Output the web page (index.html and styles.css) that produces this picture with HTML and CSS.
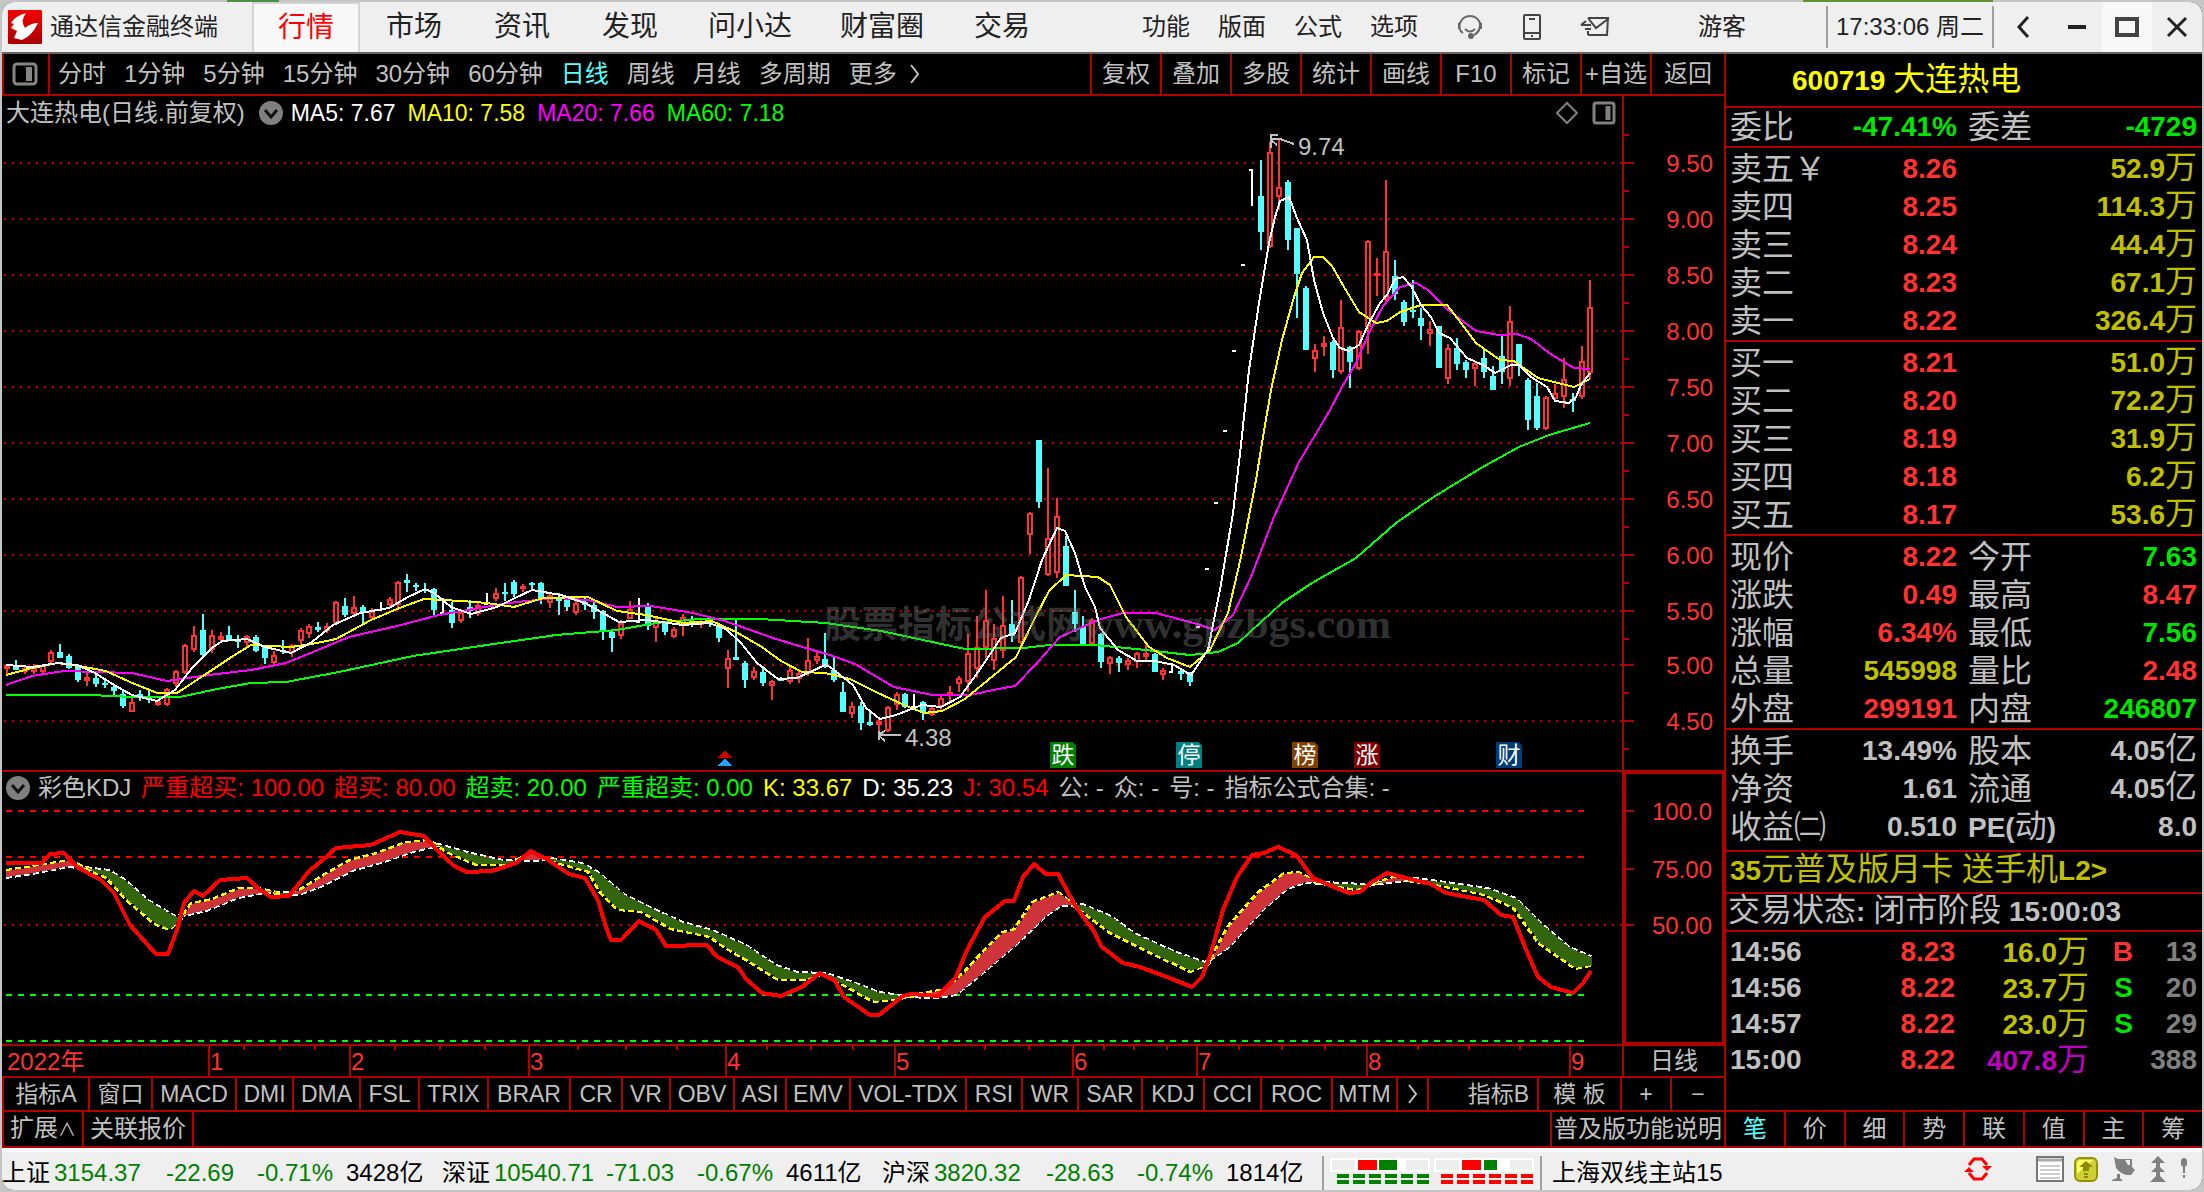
FILE: index.html
```html
<!DOCTYPE html>
<html lang="zh-CN">
<head>
  <meta charset="UTF-8" />
  <meta name="viewport" content="width=device-width, initial-scale=1.0"/>
  <title>通达信金融终端</title>
  <link rel="stylesheet" href="styles.css">
</head>
<body>
  <div class="window">
    <header class="titlebar">
      <svg class="logo" width="34" height="34" viewBox="0 0 34 34">
        <defs><linearGradient id="logo-red" x2="0" y2="1"><stop stop-color="#f20000"/><stop offset="1" stop-color="#a00"/></linearGradient></defs>
        <rect width="34" height="34" rx="1" fill="url(#logo-red)"/>
        <path d="M18 3Q7 6 3 13l3 1-3 4 6 3-3 7 8 2q10-4 16-17-7 0-13 5-5-7 1-15z" fill="#fff"/>
      </svg>
      <span class="app-name">通达信金融终端</span>
      <nav class="tabs">
        <button class="tab active">行情</button>
        <button class="tab">市场</button>
        <button class="tab">资讯</button>
        <button class="tab">发现</button>
        <button class="tab">问小达</button>
        <button class="tab">财富圈</button>
        <button class="tab">交易</button>
      </nav>
      <nav class="menu">
        <button>功能</button>
        <button>版面</button>
        <button>公式</button>
        <button>选项</button>
      </nav>
      <div class="tools">
        <button aria-label="客服">
          <svg width="28" height="28" viewBox="0 0 28 28" fill="none" stroke="#666" stroke-width="2">
            <path d="M7 20Q2 17 4 10 7 3 14 3t10 7q1 8-6 12M3 10v6M25 10v6M9 16q5 5 10 0"/>
            <circle cx="15" cy="23" r="2" fill="#666"/>
          </svg>
        </button>
        <button aria-label="手机版">
          <svg width="20" height="28" viewBox="0 0 20 28" fill="none" stroke="#444" stroke-width="2">
            <rect x="2" y="2" width="16" height="24" rx="1"/>
            <path d="M2 20h16M7 6h6M9 23h2"/>
          </svg>
        </button>
        <button aria-label="消息">
          <svg width="30" height="28" viewBox="0 0 30 28" fill="none" stroke="#444" stroke-width="2">
            <path d="M8 5h20l-1 17H8M8 5l8 10L28 6M1 12h10M1 12l5-4M5 16h6M8 22v-4"/>
          </svg>
        </button>
      </div>
      <button class="user">游客</button>
      <time class="clock">17:33:06 周二</time>
      <div class="win-buttons">
        <button aria-label="后退"><svg width="16" height="24" viewBox="0 0 16 24"><path d="M13 2 4 12l9 10" fill="none" stroke="#222" stroke-width="3"/></svg></button>
        <button aria-label="最小化"><svg width="18" height="24" viewBox="0 0 18 24"><path d="M0 12h18" stroke="#222" stroke-width="4"/></svg></button>
        <button class="max" aria-label="最大化"><svg width="26" height="24" viewBox="0 0 26 24"><rect x="3" y="4" width="20" height="16" fill="none" stroke="#444" stroke-width="4"/></svg></button>
        <button aria-label="关闭"><svg width="24" height="24" viewBox="0 0 24 24"><path d="M3 3l18 18M21 3 3 21" stroke="#222" stroke-width="3"/></svg></button>
      </div>
    </header>

    <div class="content">
      <main class="left">
        <div class="toolbar">
          <button class="pane-toggle" aria-label="侧栏">
            <svg width="26" height="24" viewBox="0 0 26 24"><rect x="2" y="2" width="22" height="20" rx="3" fill="none" stroke="#858585" stroke-width="3"/><rect x="14" y="5" width="6" height="14" fill="#858585"/></svg>
          </button>
          <nav class="periods">
            <button>分时</button>
            <button>1分钟</button>
            <button>5分钟</button>
            <button>15分钟</button>
            <button>30分钟</button>
            <button>60分钟</button>
            <button class="on">日线</button>
            <button>周线</button>
            <button>月线</button>
            <button>多周期</button>
            <button class="more">更多 <svg width="12" height="22" viewBox="0 0 12 22"><path d="M2 2l7 9-7 9" fill="none" stroke="#c0c0c0" stroke-width="2"/></svg></button>
          </nav>
          <nav class="actions">
            <button>复权</button>
            <button>叠加</button>
            <button>多股</button>
            <button>统计</button>
            <button>画线</button>
            <button>F10</button>
            <button>标记</button>
            <button>+自选</button>
            <button>返回</button>
          </nav>
        </div>

        <section class="pane price">
          <div class="plot">
            <div class="legend ma">
              <span class="name">大连热电(日线.前复权)</span>
              <svg class="drop" width="24" height="24" viewBox="0 0 24 24"><circle cx="12" cy="12" r="12" fill="#808080"/><path d="M6 9l6 7 6-7" fill="none" stroke="#111" stroke-width="3"/></svg>
              <span class="white">MA5: 7.67</span>
              <span class="yellow">MA10: 7.58</span>
              <span class="magenta">MA20: 7.66</span>
              <span class="green">MA60: 7.18</span>
              <svg class="pane-icons" width="60" height="24" viewBox="0 0 60 24" fill="none" stroke="#808080">
                <path d="M11 2l10 10-10 10L1 12z" stroke-width="2"/>
                <rect x="38" y="2" width="20" height="20" rx="2" stroke-width="3"/>
                <path d="M52 5v14" stroke-width="5"/>
              </svg>
            </div>
            <svg class="canvas" id="price-chart" height="640"></svg>
          </div>
          <svg class="axis" id="price-axis" height="674"></svg>
        </section>

        <section class="pane kdj">
          <div class="plot">
            <div class="legend">
              <svg class="drop" width="24" height="24" viewBox="0 0 24 24"><circle cx="12" cy="12" r="12" fill="#808080"/><path d="M6 9l6 7 6-7" fill="none" stroke="#111" stroke-width="3"/></svg>
              <span class="name">彩色KDJ</span>
              <span class="red">严重超买: 100.00</span>
              <span class="red">超买: 80.00</span>
              <span class="green">超卖: 20.00</span>
              <span class="green">严重超卖: 0.00</span>
              <span class="yellow">K: 33.67</span>
              <span class="white">D: 35.23</span>
              <span class="red">J: 30.54</span>
              <span>公: -</span>
              <span>众: -</span>
              <span>号: -</span>
              <span>指标公式合集: -</span>
            </div>
            <svg class="canvas" id="kdj-chart" height="240"></svg>
          </div>
          <svg class="axis boxed" id="kdj-axis"></svg>
        </section>

        <div class="pane dates">
          <svg class="canvas" id="date-axis" height="30"></svg>
          <div class="period-name">日线</div>
        </div>

        <nav class="indicators">
          <button>指标A</button><button>窗口</button><button>MACD</button><button>DMI</button><button>DMA</button><button>FSL</button><button>TRIX</button><button>BRAR</button><button>CR</button><button>VR</button><button>OBV</button><button>ASI</button><button>EMV</button><button>VOL-TDX</button><button>RSI</button><button>WR</button><button>SAR</button><button>KDJ</button><button>CCI</button><button>ROC</button><button>MTM</button><button aria-label="更多指标"><svg width="12" height="22" viewBox="0 0 12 22"><path d="M2 2l7 9-7 9" fill="none" stroke="#c0c0c0" stroke-width="2"/></svg></button><button class="end">指标B</button><button>模 板</button><button>+</button><button>−</button>
        </nav>

        <nav class="extras">
          <button>扩展<span class="caret">∧</span></button>
          <button>关联报价</button>
          <button class="help">普及版功能说明</button>
        </nav>
      </main>

      <aside class="quote">
        <h1>600719 <span class="cn">大连热电</span></h1>
        <table class="four">
          <tr><th>委比</th><td class="dn">-47.41%</td><th>委差</th><td class="dn">-4729</td></tr>
        </table>
        <table class="padded">
          <tr><th>卖五￥</th><td class="up">8.26</td><td class="vol">52.9<span class="cn">万</span></td></tr>
          <tr><th>卖四</th><td class="up">8.25</td><td class="vol">114.3<span class="cn">万</span></td></tr>
          <tr><th>卖三</th><td class="up">8.24</td><td class="vol">44.4<span class="cn">万</span></td></tr>
          <tr><th>卖二</th><td class="up">8.23</td><td class="vol">67.1<span class="cn">万</span></td></tr>
          <tr><th>卖一</th><td class="up">8.22</td><td class="vol">326.4<span class="cn">万</span></td></tr>
        </table>
        <table class="padded">
          <tr><th>买一</th><td class="up">8.21</td><td class="vol">51.0<span class="cn">万</span></td></tr>
          <tr><th>买二</th><td class="up">8.20</td><td class="vol">72.2<span class="cn">万</span></td></tr>
          <tr><th>买三</th><td class="up">8.19</td><td class="vol">31.9<span class="cn">万</span></td></tr>
          <tr><th>买四</th><td class="up">8.18</td><td class="vol">6.2<span class="cn">万</span></td></tr>
          <tr><th>买五</th><td class="up">8.17</td><td class="vol">53.6<span class="cn">万</span></td></tr>
        </table>
        <table class="four padded">
          <tr><th>现价</th><td class="up">8.22</td><th>今开</th><td class="dn">7.63</td></tr>
          <tr><th>涨跌</th><td class="up">0.49</td><th>最高</th><td class="up">8.47</td></tr>
          <tr><th>涨幅</th><td class="up">6.34%</td><th>最低</th><td class="dn">7.56</td></tr>
          <tr><th>总量</th><td class="vol">545998</td><th>量比</th><td class="up">2.48</td></tr>
          <tr><th>外盘</th><td class="up">299191</td><th>内盘</th><td class="dn">246807</td></tr>
        </table>
        <table class="four padded last">
          <tr><th>换手</th><td>13.49%</td><th>股本</th><td>4.05<span class="cn">亿</span></td></tr>
          <tr><th>净资</th><td>1.61</td><th>流通</th><td>4.05<span class="cn">亿</span></td></tr>
          <tr><th>收益㈡</th><td>0.510</td><th><b>PE(</b>动<b>)</b></th><td>8.0</td></tr>
        </table>
        <a class="promo" href="#">35<span class="cn">元普及版月卡 送手机</span>L2&gt;</a>
        <p class="state"><span class="cn">交易状态</span>: <span class="cn">闭市阶段</span> 15:00:03</p>
        <table class="ticks">
          <tr><td>14:56</td><td class="up">8.23</td><td class="vol">16.0<span class="cn">万</span></td><td class="up">B</td><td>13</td></tr>
          <tr><td>14:56</td><td class="up">8.22</td><td class="vol">23.7<span class="cn">万</span></td><td class="dn">S</td><td>20</td></tr>
          <tr><td>14:57</td><td class="up">8.22</td><td class="vol">23.0<span class="cn">万</span></td><td class="dn">S</td><td>29</td></tr>
          <tr><td>15:00</td><td class="up">8.22</td><td class="big">407.8<span class="cn">万</span></td><td></td><td>388</td></tr>
        </table>
        <nav class="side-tabs">
          <button class="on">笔</button><button>价</button><button>细</button><button>势</button><button>联</button><button>值</button><button>主</button><button>筹</button>
        </nav>
      </aside>
    </div>

    <footer class="statusbar">
      <div class="index"><span>上证</span><span class="fall">3154.37</span><span class="fall r">-22.69</span><span class="fall r">-0.71%</span><span class="amt">3428亿</span></div>
      <div class="index"><span>深证</span><span class="fall">10540.71</span><span class="fall r">-71.03</span><span class="fall r">-0.67%</span><span class="amt">4611亿</span></div>
      <div class="index"><span>沪深</span><span class="fall">3820.32</span><span class="fall r">-28.63</span><span class="fall r">-0.74%</span><span class="amt">1814亿</span></div>
      <div class="meters">
        <svg width="206" height="28" viewBox="0 0 206 28">
          <path d="M0 0h100v14H0zM104 0h100v14H104z" fill="#fff"/>
          <path d="M2 2h23v10H2zM76 2h22v10H76zM106 2h23v10h-23zM180 2h22v10h-22z" fill="#eee"/>
          <path d="M28 2h19v10H28zM132 2h19v10h-19z" fill="#f00"/>
          <path d="M49 2h18v10H49zM154 2h13v10h-13z" fill="#008000"/>
          <path d="M7 18h94M7 24h94" stroke="#008000" stroke-width="4" stroke-dasharray="12 4"/>
          <path d="M111 18h94M111 24h94" stroke="#f00" stroke-width="4" stroke-dasharray="12 4"/>
        </svg>
      </div>
      <span class="server">上海双线主站15</span>
      <div class="tray">
        <svg width="28" height="26" viewBox="0 0 28 26"><path d="M5 9l5-6h8l5 6M5 17l5 6h8l5-6" fill="none" stroke="#f00" stroke-width="3"/><path d="M18 10h10l-5 5zM0 16h10l-5-5z" fill="#f00"/></svg>
        <svg class="doc" width="28" height="26" viewBox="0 0 28 26"><rect x="1" y="1" width="26" height="24" fill="#fff" stroke="#777" stroke-width="2"/><path d="M2 4h24" stroke="#aaa" stroke-width="3"/><path d="M4 10h20M4 14h20M4 18h20M4 22h20" stroke="#ccc" stroke-width="2"/></svg>
        <svg width="24" height="26" viewBox="0 0 24 26"><rect x="1" y="2" width="22" height="23" rx="5" fill="#cfcf38" stroke="#949400" stroke-width="2"/><path d="M3 18V8q0-4 4-4h12z" fill="#ffff66"/><path d="M12 5l7 6h-4v4H9v-4H5zM10 17h4v2h-4zM10 20h4v2h-4z" fill="#8a8a00"/></svg>
        <svg class="dish" width="24" height="26" viewBox="0 0 24 26"><path d="M2 1l4 2h14v8l3 3-4 5q-9 1-15-7zM5 18h3v4l3 3H0v-1l5-2z" fill="#808080"/><path d="M13 4h5v5h-2z" fill="#eee"/></svg>
        <svg class="up-arrows" width="16" height="26" viewBox="0 0 16 26"><path d="M8 0l7 7H1zM8 9l7 7H1zM8 18l8 8H0z" fill="#808080"/><path d="M8 4v22" stroke="#808080" stroke-width="4"/></svg>
        <svg class="bang" width="8" height="26" viewBox="0 0 8 26"><path d="M3 2h2l2 2v5l-2 2v6H3v-6L1 9V4zM3 19h2v3H3z" fill="#808080"/></svg>
      </div>
    </footer>
  </div>
  <script src="chart.js"></script>
</body>
</html>
```

FILE: styles.css
```css
* {
  box-sizing: border-box;
}

body {
  margin: 0;
  padding: 2px;
  min-height: 100vh;
  background:
    linear-gradient(#4d8f45, #4d8f45) 227px 0 / 52px 2px no-repeat,
    linear-gradient(#5f9432, #5f9432) 1803px 0 / 190px 2px no-repeat,
    #c6c6c6;
  font-family: "Liberation Sans", "Noto Sans CJK SC", sans-serif;
  font-size: 24px;
  line-height: 30px;
  color: #c0c0c0;
}

button {
  margin: 0;
  padding: 0;
  border: 0;
  background: none;
  color: inherit;
  font: inherit;
  white-space: nowrap;
  cursor: pointer;
}

svg {
  display: block;
  flex: none;
}

.window {
  background: #000;
  border-radius: 12px;
  overflow: hidden;
}

/* title bar */
.titlebar {
  display: flex;
  align-items: center;
  height: 52px;
  background: #efefef;
  border-bottom: 2px solid #666;
  color: #222;
}

.logo {
  margin-left: 6px;
}

.app-name {
  width: 168px;
  margin: 0 34px 0 8px;
  white-space: nowrap;
}

.tabs {
  display: flex;
  align-self: stretch;
}

.tab {
  min-width: 108px;
  padding: 0 24px;
  font-size: 28px;
}

.tab.active {
  background: #f8f8f8;
  border: 2px solid #d4d4d4;
  border-bottom: 0;
  color: #f00;
}

.menu {
  display: flex;
  gap: 28px;
  margin-left: auto;
}

.tools {
  display: flex;
  gap: 38px;
  margin-left: 38px;
}

.user {
  margin: 0 80px 0 88px;
}

.clock {
  display: flex;
  align-items: center;
  align-self: stretch;
  width: 168px;
  margin: 4px 0;
  padding-left: 8px;
  border-left: 2px solid #a0a0a0;
  border-right: 2px solid #a0a0a0;
  white-space: nowrap;
}

.win-buttons {
  display: flex;
  align-self: stretch;
}

.win-buttons button {
  display: flex;
  align-items: center;
  justify-content: center;
  width: 50px;
}

.win-buttons button:first-child {
  width: 58px;
}

.win-buttons .max {
  background: #f8f8f8;
}

/* two columns */
.content {
  display: flex;
}

.left {
  flex: 1;
  min-width: 0;
}

.quote {
  display: flex;
  flex-direction: column;
  width: 478px;
  border-left: 2px solid #b00000;
}

/* period toolbar */
.toolbar {
  display: flex;
  height: 42px;
  border-bottom: 2px solid #b00000;
}

.pane-toggle {
  width: 48px;
  padding-left: 8px;
  border-left: 2px solid #b00000;
  border-right: 2px solid #b00000;
}

.periods {
  display: flex;
  gap: 18px;
  padding-left: 8px;
}

.more {
  display: flex;
  align-items: center;
  gap: 12px;
}

.on {
  color: #54ffff;
}

.actions {
  display: flex;
  margin-left: auto;
}

.actions button {
  width: 70px;
  border-left: 2px solid #b00000;
}

.actions button:last-child {
  width: 74px;
}

/* chart panes */
.pane {
  display: grid;
  grid-template-columns: minmax(0, 1fr) 102px;
  border-bottom: 2px solid #b00000;
}

.canvas {
  width: 100%;
  overflow: hidden;
  shape-rendering: crispEdges;
}

.axis {
  width: 102px;
  border-left: 2px solid #b00000;
}

.axis.boxed {
  height: 272px;
  border: 2px solid #b00000;
  border-left-width: 4px;
}

.legend {
  display: flex;
  align-items: center;
  gap: 10px;
  height: 32px;
  padding-left: 4px;
  white-space: nowrap;
}

.legend .name {
  margin-left: -2px;
}

.legend.ma {
  gap: 12px;
  height: 34px;
  font-size: 23px;
}

.ma .name {
  margin: 0 2px 0 0;
  font-size: 24px;
}

.ma .drop {
  margin: 0 -4px 0 0;
}

.pane-icons {
  margin: 0 6px 0 auto;
}

.white { color: #fff; }
.yellow { color: #ff0; }
.magenta { color: #f0f; }
.green { color: #0f0; }
.red { color: #f00; }

.dates {
  height: 32px;
}

.period-name {
  border-left: 2px solid #b00000;
  text-align: center;
}

.indicators {
  display: grid;
  grid-template-columns: 86px 63px 84px 57px 67px 59px 69px 82px 52px 48px 64px 52px 64px 116px 56px 56px 64px 62px 57px 71px 65px 31px 1fr 83px 50px 52px;
  height: 34px;
  border-left: 2px solid #b00000;
  border-bottom: 2px solid #b00000;
  font-size: 23px;
}

.indicators button {
  display: flex;
  align-items: center;
  justify-content: center;
  border-right: 2px solid #b00000;
}

.indicators .end {
  justify-content: flex-end;
  padding-right: 8px;
}

.indicators button:last-child {
  border-right: 0;
}

.extras {
  display: flex;
  height: 36px;
  border-left: 2px solid #b00000;
  border-bottom: 2px solid #b00000;
}

.extras button {
  padding: 0 6px;
  border-right: 2px solid #b00000;
}

.caret {
  font-size: 18px;
}

.extras .help {
  margin-left: auto;
  padding: 0 2px;
  border-right: 0;
  border-left: 2px solid #b00000;
}

/* quote panel */
.quote h1 {
  height: 54px;
  margin: 0;
  padding-left: 66px;
  border-bottom: 2px solid #b00000;
  line-height: 54px;
  font-size: 28px;
  color: #ff0;
}

.cn {
  font-size: 32px;
  font-weight: normal;
  line-height: 1;
}

.quote table {
  width: 100%;
  table-layout: fixed;
  border-collapse: separate;
  border-spacing: 0;
  border-bottom: 2px solid #b00000;
  font-size: 28px;
}

.quote tr {
  height: 38px;
}

.quote td,
.quote th {
  padding: 0;
  line-height: 36px;
  white-space: nowrap;
}

.quote th {
  padding-left: 4px;
  font-size: 32px;
  font-weight: normal;
  text-align: left;
}

.quote th b {
  font-size: 28px;
}

.quote td {
  font-weight: bold;
  text-align: right;
}

.quote .padded {
  padding-top: 2px;
}

.quote .last {
  padding-bottom: 4px;
}

.quote th:first-child {
  width: 100px;
}

.quote td:nth-child(2) {
  width: 131px;
}

.four th:nth-child(3) {
  width: 107px;
  padding-left: 11px;
}

.quote td:last-child {
  padding-right: 5px;
}

.up { color: #ff3232; }
.dn { color: #00e600; }
.vol { color: #c0c000; }
.big { color: #c000c0; }

.promo,
.state {
  margin: 0;
  padding-left: 4px;
  border-bottom: 2px solid #b00000;
  font-size: 28px;
  font-weight: bold;
  white-space: nowrap;
}

.promo {
  height: 42px;
  line-height: 38px;
  color: #c0c000;
  text-decoration: none;
}

.state {
  height: 38px;
  padding-left: 2px;
  line-height: 34px;
}

.quote .ticks {
  padding-top: 2px;
  border-bottom: 0;
}

.quote .ticks tr {
  height: 36px;
}

.quote .ticks td {
  line-height: 34px;
}

.quote .ticks td:first-child {
  width: 100px;
  padding-left: 4px;
  text-align: left;
}

.quote .ticks td:nth-child(2) {
  width: 129px;
}

.ticks td:nth-child(3) {
  width: 134px;
}

.ticks td:nth-child(4) {
  width: 44px;
}

.ticks td:last-child {
  color: #808080;
}

.side-tabs {
  display: grid;
  grid-template-columns: 58px repeat(7, 1fr);
  height: 38px;
  margin-top: auto;
  border-top: 2px solid #b00000;
  border-bottom: 2px solid #b00000;
}

.side-tabs button + button {
  border-left: 2px solid #b00000;
}

/* status bar */
.statusbar {
  display: flex;
  align-items: center;
  height: 42px;
  padding-top: 4px;
  border-top: 4px solid #fff;
  background: #efefef;
  color: #000;
  white-space: nowrap;
}

.index {
  display: grid;
  grid-template-columns: 52px 104px 76px 99px 109px;
}

.fall {
  color: #008000;
}

.r {
  text-align: right;
}

.amt {
  padding-left: 13px;
}

.meters {
  padding: 2px 4px 4px 6px;
  border-left: 2px solid #a0a0a0;
  border-right: 2px solid #a0a0a0;
}

.server {
  padding-left: 10px;
}

.tray {
  display: flex;
  align-self: flex-start;
  gap: 14px;
  margin-left: auto;
  padding-right: 14px;
}

.tray .doc {
  margin-left: 30px;
  margin-right: -4px;
}
```

FILE: chart.js
```javascript
const NS = 'http://www.w3.org/2000/svg';
const RED = '#ff3232';
const LINE = '#b00000';

function add(parent, tag, attrs, text) {
  const node = document.createElementNS(NS, tag);
  for (const key in attrs) node.setAttribute(key, attrs[key]);
  if (text !== undefined) node.textContent = text;
  parent.appendChild(node);
  return node;
}

function layer(id, dx, dy) {
  return add(document.getElementById(id), 'g', { transform: `translate(${dx} ${dy})` });
}

// one bar per entry: colour, high, body top, body bottom, low
const bars = `r664,665,669,674 c660,665,670,670 r665,668,672,674 r664,666,672,674 r664,665,672,673 r650,652,662,664
c644,652,658,658 c654,656,668,669 c664,667,680,682 r673,677,681,686 c671,678,684,687 c680,683,685,688 c684,687,691,695
c689,694,706,708 r694,702,712,712 c690,694,695,701 c690,697,698,703 r699,701,705,706 r688,689,705,706 r670,671,684,687
r644,645,673,674 r626,635,650,652 c614,630,655,656 r630,635,650,653 r632,636,640,642 c626,635,640,641 c635,640,642,648
r635,636,643,648 c635,637,651,652 c645,647,658,664 r651,655,663,665 c640,650,651,654 r644,645,653,657 r628,630,641,644
r624,626,634,638 c622,627,630,632 r623,626,631,633 r601,602,623,625 c598,606,615,617 r596,607,614,617 c605,607,612,623
r608,611,618,620 w602,609,611,609 r597,599,605,608 r581,582,605,608 c574,580,583,592 c583,585,587,591 c583,589,591,593
c588,589,610,615 w598,612,614,614 c602,610,623,628 r609,612,621,623 c600,607,611,618 r603,605,614,616 w593,603,605,604
r588,593,599,601 c583,592,594,601 c580,582,594,597 r584,586,589,592 c582,583,584,590 c582,583,600,604 r592,595,603,608
c593,598,601,615 c596,599,607,611 r599,603,613,615 c598,602,605,610 c602,605,612,619 c610,611,630,640 c629,632,638,652
r620,623,636,639 r601,609,619,619 w598,621,623,623 c603,605,626,630 r618,620,628,642 c621,623,632,635 r627,629,637,638
r614,617,625,636 c616,621,623,627 r620,622,625,628 c620,622,624,627 c623,626,638,642 r650,658,669,688 c618,657,660,660
c661,663,680,688 r667,671,678,680 c666,672,683,686 r680,681,686,700 c677,678,681,681 r666,670,682,684 r669,673,679,683
r638,660,674,676 r650,656,661,664 c633,659,667,668 c656,670,680,682 c682,692,712,712 r702,706,714,718 c702,706,723,730
c711,722,725,726 r717,721,725,732 r706,707,731,732 r692,694,705,710 c693,694,707,708 w694,706,708,708 c701,702,713,720
r707,708,715,716 r695,698,707,710 r686,692,694,702 r676,678,684,692 r634,653,682,692 r616,647,669,678 r590,620,648,658
r624,638,661,670 r596,625,651,658 c600,624,636,642 r576,577,643,644 r512,513,535,554 c440,440,502,508 r468,538,575,576
r498,516,573,578 c536,546,586,586 c590,612,624,632 c616,627,644,645 r618,620,644,645 c633,634,662,668 r656,657,664,674
c656,658,663,672 r658,660,665,670 r652,653,662,668 r643,653,657,662 c653,654,672,672 r668,670,675,680 w663,671,673,673
c668,671,674,680 c672,674,682,686 w626,626,628,628 w568,568,570,570 w502,502,504,504 w430,430,432,432 w350,350,352,352
w264,264,266,266 w169,169,171,206 c160,196,232,250 r142,152,247,248 r138,187,197,210 c180,182,240,250 c228,228,274,318
c286,288,350,350 r344,350,359,372 r336,343,347,356 c340,342,370,378 r300,327,372,374 c346,347,362,388 r330,331,369,370
r240,241,327,354 r258,273,275,296 r180,251,300,302 c260,276,294,300 c300,302,322,326 c280,310,312,318 c308,318,326,340
r321,329,334,346 c326,326,368,368 r344,348,379,384 c338,348,364,370 c360,362,370,378 r362,363,369,386 c350,358,372,378
c366,376,390,390 c336,356,372,384 r306,321,379,386 c344,344,366,376 c378,380,420,430 c383,396,428,430 r396,397,429,430
r384,393,399,401 r358,379,397,408 c393,399,401,412 r346,361,397,399 r280,307,373,379`.split(/\s+/);

const averages = {
  '#0f0': '6,695 90,695 132,697 180,697 217,689 251,683 286,682 339,672 413,656 487,645 556,635 617,630 656,623 699,619 760,619 826,623 881,631 965,649 1024,648 1049,645 1095,645 1136,649 1190,655 1218,652 1238,643 1261,622 1282,603 1312,583 1356,558 1396,523 1432,498 1481,468 1519,447 1549,435 1590,423',
  '#f0f': '6,685 32,676 64,671 132,673 167,681 209,675 251,670 286,663 318,650 349,637 397,626 439,615 479,608 508,603 556,598 588,600 617,607 651,606 693,613 725,621 773,638 799,646 830,655 855,664 894,687 932,695 970,695 998,689 1015,686 1037,663 1060,637 1098,620 1123,613 1156,613 1197,624 1215,630 1233,615 1251,577 1274,517 1299,462 1323,422 1330,410 1342,387 1356,363 1369,333 1383,306 1400,287 1416,283 1428,290 1447,309 1476,331 1499,335 1517,334 1531,339 1552,355 1574,368 1590,369',
  '#ff0': '6,675 32,668 58,663 79,666 106,671 130,682 157,693 177,693 206,674 233,656 251,645 291,647 312,644 336,639 371,620 402,607 424,599 461,601 487,603 514,607 543,598 588,597 617,611 646,615 683,623 712,621 736,632 762,647 781,661 802,672 825,673 850,679 876,692 904,705 924,713 942,711 965,699 988,680 1016,657 1034,620 1049,591 1066,575 1098,577 1110,585 1126,617 1149,647 1167,658 1190,667 1210,650 1228,613 1241,557 1256,480 1263,437 1271,390 1282,340 1294,297 1302,273 1314,257 1323,257 1332,266 1344,287 1359,312 1376,323 1387,321 1400,312 1421,305 1447,305 1461,323 1476,343 1500,360 1514,361 1538,378 1574,387 1590,379',
  '#fff': '6,665 32,667 58,663 77,665 95,673 114,685 132,695 157,701 175,690 192,668 212,648 222,641 247,639 265,647 291,653 312,642 333,625 360,613 389,608 408,597 425,589 434,593 451,607 471,614 497,607 513,599 532,590 561,595 585,603 601,612 619,622 647,620 683,625 709,623 726,629 741,643 757,663 778,679 797,678 810,672 825,665 830,667 853,685 866,708 880,719 896,715 922,705 941,707 960,697 978,672 1001,638 1015,633 1029,600 1042,560 1057,528 1065,531 1075,553 1085,587 1095,607 1100,628 1118,650 1137,661 1155,661 1174,665 1191,675 1208,650 1220,590 1233,513 1241,445 1249,370 1259,303 1269,243 1275,217 1280,201 1289,197 1297,218 1307,240 1314,280 1323,313 1333,338 1340,348 1349,351 1359,345 1369,323 1380,303 1387,295 1395,279 1403,277 1411,286 1421,305 1431,317 1439,333 1450,338 1467,358 1483,365 1495,373 1511,365 1519,365 1531,377 1547,387 1555,401 1569,403 1576,397 1581,385 1590,373'
};

const lineK = '6,871 32,867 69,861 106,877 127,900 154,923 169,929 180,920 191,904 212,900 238,889 259,889 286,895 302,889 328,873 349,861 376,854 405,843 429,841 450,853 476,864 508,864 531,854 556,862 588,871 601,893 617,909 641,911 670,928 709,936 725,947 752,963 778,979 805,979 821,974 841,983 873,1001 894,999 917,995 944,990 964,973 985,950 1002,933 1014,930 1032,903 1058,893 1076,907 1111,933 1152,953 1190,971 1208,964 1228,927 1258,893 1284,874 1299,873 1316,882 1355,889 1393,878 1440,885 1484,894 1513,907 1539,943 1575,968 1591,965';
const lineD = '6,877 32,873 69,866 109,871 124,880 148,901 175,917 206,910 238,897 265,892 299,894 323,885 352,870 384,861 413,851 439,845 471,854 503,861 551,859 582,864 598,873 625,896 654,910 683,923 712,931 746,946 776,966 797,973 826,974 853,983 879,993 900,996 938,997 956,994 982,973 1017,943 1046,915 1061,905 1082,905 1111,917 1134,934 1176,953 1205,963 1228,947 1264,908 1287,888 1305,882 1363,885 1416,879 1446,883 1487,889 1516,899 1542,925 1569,948 1591,957';
const lineJ = '6,863 42,863 50,854 64,853 77,867 101,880 114,893 130,925 156,954 168,954 177,930 184,903 194,891 203,896 220,880 247,878 259,889 271,897 289,896 310,870 323,860 336,848 371,845 400,832 424,836 434,847 453,865 466,872 492,871 516,863 531,851 548,860 569,874 585,878 598,900 606,927 611,940 621,940 639,921 656,930 666,946 707,945 717,957 738,967 746,979 762,993 781,996 802,987 820,973 835,981 844,997 870,1015 879,1015 903,996 911,994 938,996 956,977 967,950 985,917 1005,901 1014,901 1023,877 1034,864 1046,874 1058,874 1076,907 1093,930 1102,947 1123,963 1140,967 1167,977 1192,987 1202,977 1211,953 1223,910 1237,877 1252,855 1264,853 1278,847 1296,855 1313,878 1334,887 1349,893 1360,892 1372,882 1387,873 1410,879 1431,884 1446,893 1484,900 1501,915 1513,917 1525,947 1538,977 1551,987 1573,993 1583,983 1591,971';

// value of a polyline at x
function at(line, x) {
  const pts = line.split(' ').map(p => p.split(',').map(Number));
  for (let i = 1; i < pts.length; i++) {
    const [x0, y0] = pts[i - 1];
    const [x1, y1] = pts[i];
    if (x <= x1) return y0 + (y1 - y0) * (x - x0) / (x1 - x0);
  }
  return pts[pts.length - 1][1];
}

const levels = { '9.50': 163, '9.00': 219, '8.50': 275, '8.00': 331, '7.50': 387, '7.00': 443, '6.50': 499, '6.00': 555, '5.50': 611, '5.00': 665, '4.50': 721 };

function drawPrice() {
  const g = layer('price-chart', -2, -130);
  const axis = layer('price-axis', 0, -96);
  for (const label in levels) {
    const y = levels[label];
    add(g, 'path', { d: `M4 ${y}H4000`, stroke: LINE, 'stroke-width': 2, 'stroke-dasharray': '2 6' });
    add(axis, 'path', { d: `M0 ${y}h10M0 ${y + 28}h5`, stroke: LINE, 'stroke-width': 2 });
    add(axis, 'text', { x: 89, y: y + 9, fill: RED, 'text-anchor': 'end' }, label);
  }
  add(axis, 'path', { d: 'M0 135h5', stroke: LINE, 'stroke-width': 2 });

  bars.forEach((bar, i) => {
    const x = Math.round(7 + i * 8.896);
    const [high, top, bottom, low] = bar.slice(1).split(',').map(Number);
    if (bar[0] === 'c') {
      add(g, 'path', { d: `M${x} ${high}V${low}`, stroke: '#54ffff', 'stroke-width': 2 });
      add(g, 'rect', { x: x - 3, y: top, width: 6, height: Math.max(2, bottom - top), fill: '#54ffff' });
    } else if (bar[0] === 'r') {
      add(g, 'path', { d: `M${x} ${high}V${top}M${x} ${bottom}V${low}`, stroke: RED, 'stroke-width': 2 });
      add(g, 'rect', { x: x - 2, y: top + 1, width: 4, height: Math.max(1, bottom - top - 2), fill: '#000', stroke: RED, 'stroke-width': 2 });
    } else {
      add(g, 'path', { d: `M${x} ${high}V${low}M${x - 3} ${top + 1}h4`, stroke: '#fff', 'stroke-width': 2 });
    }
  });

  for (const color in averages) {
    add(g, 'polyline', { points: averages[color], fill: 'none', stroke: color, 'stroke-width': 2 });
  }

  // highest and lowest price
  add(g, 'path', { d: 'M1271 148v-13h7M1271 139l9 0 14 5M1272 141l5 4M879 740v-9M878 735h23M878 735l7 6M878 735l7-4', fill: 'none', stroke: '#c0c0c0', 'stroke-width': 2 });
  add(g, 'text', { x: 1298, y: 155, fill: '#c0c0c0' }, '9.74');
  add(g, 'text', { x: 905, y: 746, fill: '#c0c0c0' }, '4.38');

  const mark = add(g, 'text', { x: 824, y: 638, fill: '#808080', 'fill-opacity': 0.38, 'font-family': '"Liberation Serif", "Noto Sans CJK SC", serif', 'font-weight': 'bold' });
  add(mark, 'tspan', { 'font-size': 37 }, '股票指标公式网');
  add(mark, 'tspan', { 'font-size': 42 }, 'www.gpzbgs.com');

  add(g, 'path', { d: 'M725 750l7 8h-14z', fill: '#d00000' });
  add(g, 'path', { d: 'M725 758l7 8h-14z', fill: '#20a0ff' });

  [['跌', 1050, '#008000'], ['停', 1176, '#008080'], ['榜', 1292, '#804000'], ['涨', 1354, '#800000'], ['财', 1496, '#003c78']].forEach(([text, x, fill]) => {
    add(g, 'path', { d: `M${x} 742h22l4 4v22h-26z`, fill });
    add(g, 'text', { x: x + 13, y: 763, fill: '#fff', 'font-size': 23, 'text-anchor': 'middle' }, text);
  });
}

function drawKdj() {
  const g = layer('kdj-chart', -2, -804);
  const axis = layer('kdj-axis', 0, -774);
  add(g, 'path', { d: 'M4 925H4000', stroke: LINE, 'stroke-width': 2, 'stroke-dasharray': '2 6' });
  add(g, 'path', { d: 'M6 811H1584M6 857H1584', stroke: '#f00', 'stroke-width': 2, 'stroke-dasharray': '6 6' });
  add(g, 'path', { d: 'M6 995H1584M6 1041H1584', stroke: '#0f0', 'stroke-width': 2, 'stroke-dasharray': '6 6' });

  add(g, 'polyline', { points: lineD, fill: 'none', stroke: '#fff', 'stroke-width': 4, 'stroke-dasharray': '6 3' });
  add(g, 'polyline', { points: lineK, fill: 'none', stroke: '#ff0', 'stroke-width': 4, 'stroke-dasharray': '6 3' });

  // band between K and D
  let up = '';
  let down = '';
  for (let x = 6; x <= 1590; x += 2) {
    const k = Math.round(at(lineK, x));
    const d = Math.round(at(lineD, x));
    const seg = `M${x} ${k}V${d}h2V${k}z`;
    if (k < d) up += seg; else down += seg;
  }
  add(g, 'path', { d: up, fill: '#cd3338' });
  add(g, 'path', { d: down, fill: '#33660c' });

  add(g, 'polyline', { points: lineJ, fill: 'none', stroke: '#f00', 'stroke-width': 4, 'stroke-linejoin': 'round' });

  [['100.0', 811], ['75.00', 869], ['50.00', 925]].forEach(([label, y]) => {
    add(axis, 'path', { d: `M0 ${y}h8`, stroke: LINE, 'stroke-width': 2 });
    add(axis, 'text', { x: 86, y: y + 9, fill: RED, 'text-anchor': 'end' }, label);
  });
}

function drawDates() {
  const g = layer('date-axis', -2, 0);
  [209, 350, 529, 726, 895, 1073, 1197, 1367, 1570].forEach((x, i) => {
    add(g, 'path', { d: `M${x} 0v30`, stroke: LINE, 'stroke-width': 2 });
    add(g, 'text', { x: x + 1, y: 24, fill: RED }, i + 1);
  });
  [244, 280, 315, 395, 440, 485, 578, 626, 677, 767, 811, 853, 939, 985, 1029, 1104, 1134, 1167, 1239, 1282, 1325, 1418, 1469, 1520].forEach(x => {
    add(g, 'path', { d: `M${x} 0v4`, stroke: LINE, 'stroke-width': 2 });
  });
  add(g, 'text', { x: 7, y: 24, fill: RED }, '2022年');
}

drawPrice();
drawKdj();
drawDates();
```
